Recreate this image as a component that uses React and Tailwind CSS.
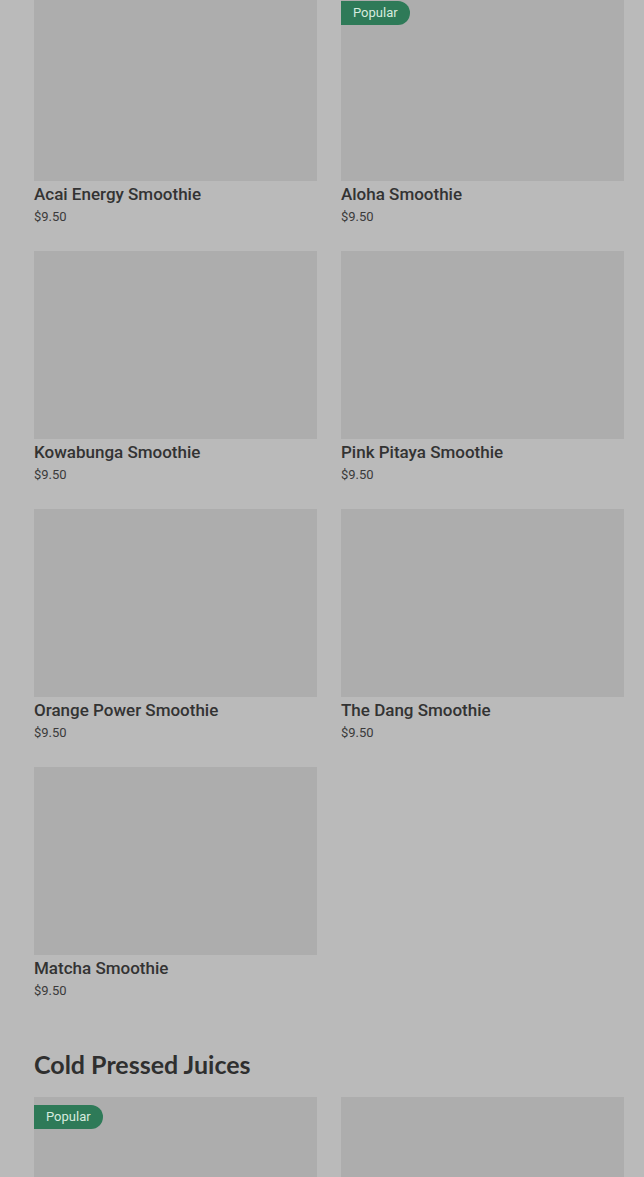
import React from 'react';

const smoothies = [
  { name: 'Acai Energy Smoothie', price: '$9.50' },
  { name: 'Aloha Smoothie', price: '$9.50', popular: true },
  { name: 'Kowabunga Smoothie', price: '$9.50' },
  { name: 'Pink Pitaya Smoothie', price: '$9.50' },
  { name: 'Orange Power Smoothie', price: '$9.50' },
  { name: 'The Dang Smoothie', price: '$9.50' },
  { name: 'Matcha Smoothie', price: '$9.50' },
];

// only the tops of these show in the viewport
const juices = [
  { name: 'Green Machine', popular: true },
  { name: 'Beet It' },
];

const Badge = () => (
  <span className="absolute left-0 top-[8px] flex h-6 items-center rounded-r-full bg-[#2e7a58] pl-3 pr-3 text-[13px] text-[#d6ebdf]">
    Popular
  </span>
);

const ProductCard = ({ item }) => (
  <div className="flex flex-col">
    <div className="relative h-[188px] w-full bg-[#adadad]">
      {item.popular && <Badge />}
    </div>
    <div className="mt-[1px] text-[17px] font-medium leading-6 text-[#333333]">{item.name}</div>
    <div className="text-[13px] leading-[21px] text-[#3a3a3a]">{item.price}</div>
  </div>
);

export default function App() {
  return (
    <div
      className="h-[1177px] overflow-hidden bg-[#bababa] pl-[34px] pr-[20px]"
      style={{ fontFamily: 'Roboto, "Liberation Sans", sans-serif' }}
    >
      <div className="mt-[-7px] grid grid-cols-2 gap-x-6 gap-y-6">
        {smoothies.map((s) => (
          <ProductCard key={s.name} item={s} />
        ))}
      </div>

      <h2 className="mt-[47px] font-['Lato',sans-serif] text-[25px] font-bold leading-8 text-[#2f2f2f]">
        Cold Pressed Juices
      </h2>

      <div className="mt-[17px] grid grid-cols-2 gap-x-6">
        {juices.map((j) => (
          <div key={j.name} className="relative h-[188px] w-full bg-[#adadad]" aria-label={j.name}>
            {j.popular && <Badge />}
          </div>
        ))}
      </div>
    </div>
  );
}
